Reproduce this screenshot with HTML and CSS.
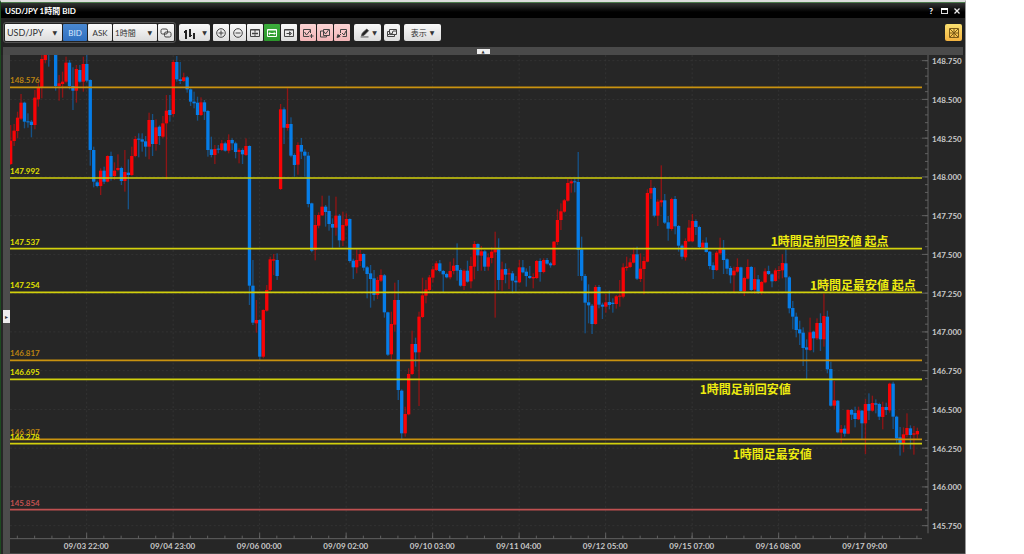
FILE: index.html
```
<!DOCTYPE html>
<html lang="ja">
<head>
<meta charset="utf-8">
<title>USD/JPY 1時間 BID</title>
<link rel="stylesheet" href="styles.css">
</head>
<body>
<main class="window">
  <header class="titlebar">
    <h1 class="title">USD/JPY 1時間 BID</h1>
    <div class="window-buttons">
      <button class="wbtn" aria-label="ヘルプ">?</button>
      <button class="wbtn" aria-label="最大化"><svg width="7" height="6" viewBox="0 0 7 6"><rect x=".5" y=".5" width="6" height="5" fill="none" stroke="#ddd"/><path d="M0 1h7" stroke="#fff" stroke-width="2"/></svg></button>
      <button class="wbtn" aria-label="閉じる"><svg width="6" height="6" viewBox="0 0 6 6"><path d="M.5.5l5 5M5.500 .5l-5 5" stroke="#eee" stroke-width="1.300"/></svg></button>
    </div>
  </header>

  <div class="toolbar">
    <div class="group framed">
      <label class="pick pair"><select aria-label="通貨ペア"><option>USD/JPY</option></select></label>
      <button class="tool text active">BID</button>
      <button class="tool text ask">ASK</button>
      <label class="pick period"><select aria-label="足種"><option>1時間</option></select></label>
      <button class="tool link" aria-label="連動"><svg viewBox="0 0 16 16"><rect x="3" y="4" width="6.500" height="5" rx="1.500"/><rect x="6.500" y="7" width="6.500" height="5" rx="1.500"/></svg></button>
    </div>
    <button class="tool wide-a" aria-label="チャート種類"><svg viewBox="0 0 16 16" class="solid"><path d="M3 5h2v9H3zM7 4h2v8H7zM11 8h2v6h-2zM2 6h1v2H2zM9 10h1v1H9z"/></svg><span class="caret">▼</span></button>
    <div class="group zoomers">
      <button class="tool" aria-label="拡大"><svg viewBox="0 0 16 16"><circle cx="8" cy="8" r="4.300"/><path d="M5.500 8h5M8 5.500v5"/></svg></button>
      <button class="tool" aria-label="縮小"><svg viewBox="0 0 16 16"><circle cx="8" cy="8" r="4.300"/><path d="M5.500 8h5"/></svg></button>
      <button class="tool" aria-label="間隔"><svg viewBox="0 0 16 16"><path d="M3.500 4.500h9v7h-9zM3.500 5h9M8 5v6M5 8.500h6M6 7.500v2M10 7.500v2"/></svg></button>
      <button class="tool green" aria-label="全体"><svg viewBox="0 0 16 16"><path d="M3.500 4.500h9v7h-9zM3.500 5h9M5 8.500h6M6 7.300L4.800 8.500 6 9.700M10 7.300l1.200 1.200L10 9.700"/></svg></button>
      <button class="tool" aria-label="最新へ"><svg viewBox="0 0 16 16"><path d="M3.500 4.500h9v7h-9zM3.500 5h9M5.500 8.500h4M8.500 6.800l2 1.700-2 1.700z"/></svg></button>
    </div>
    <div class="group pinks">
      <button class="tool pink" aria-label="追加"><svg viewBox="0 0 16 16"><path d="M9 11.500H3.500v-7h7V8M4.500 7l2 3 4-5M9.500 11h4M11.500 9v4"/></svg></button>
      <button class="tool pink" aria-label="複製"><svg viewBox="0 0 16 16"><path d="M6.500 4.500h6v6h-6zM6.500 6h-3v6h6v-1.500M7 6.500l1.500 2.500 3-4"/></svg></button>
      <button class="tool pink" aria-label="編集"><svg viewBox="0 0 16 16"><path d="M6.500 8V4.500h6v7h-4M8 8l2 2 2-4M4 12l3-3"/><path d="M3 12.500l1-3 2 2z" class="fill"/></svg></button>
    </div>
    <button class="tool wide-b" aria-label="描画"><svg viewBox="0 0 16 16"><path d="M4 11l1-3 5-4.500 2 2L7 10.500z" class="fill"/><path d="M3 12.500h9"/></svg><span class="caret">▼</span></button>
    <button class="tool single" aria-label="重ね表示"><svg viewBox="0 0 16 16"><path d="M5.500 4.500h7v5h-7zM5.500 6.500h-2v5h7v-2M4 10l2-2 2 1 1-3 3 0"/></svg></button>
    <button class="tool show">表示<span class="caret">▼</span></button>
    <button class="tool gold" aria-label="レイアウト"><svg viewBox="0 0 16 16"><path d="M3.500 3.500h9v9h-9zM8 3.500v9M3.500 8h9M4 4l8 8M12 4l-8 8"/></svg></button>
  </div>

  <div class="splitter"><button class="handle-top" aria-label="上部を開く">▲</button></div>

  <section class="workspace">
    <div class="side"><button class="handle-side" aria-label="左側を開く">▸</button></div>
    <div class="plot">
      <svg id="chart" class="chart" viewBox="30 165 2766 1455" preserveAspectRatio="none" role="img" aria-label="USD/JPY 1時間足"></svg>
      <div id="labels"></div>
    </div>
    <div class="prices" id="prices"></div>
    <div class="times" id="times"></div>
  </section>
</main>
<script src="chart.js"></script>
</body>
</html>
```
FILE: styles.css
```
* { box-sizing: border-box; }
body {
  margin: 0;
  background: #fff;
  font: 8px/12px Lato, "Noto Sans CJK JP", sans-serif;
}
button, select { font: inherit; margin: 0; padding: 0; border: 0; }

.window {
  display: flex;
  flex-direction: column;
  height: 100vh;
  margin-right: 58px;
  background: #222;
  border-top: 2px solid #ddd;
  border-right: 1px solid #999;
  border-left: 1px solid #1c4a20;
  color: #ddd;
}
.titlebar {
  display: flex;
  justify-content: space-between;
  align-items: center;
  height: 16px;
  padding: 0 4px;
  border-top: 1px solid #4a7a4a;
  background: linear-gradient(#333, #000 60%);
}
.title { margin: 0; font-size: 8px; line-height: 12px; font-weight: 700; color: #fff; }
.window-buttons { display: flex; gap: 5px; }
.wbtn {
  display: flex;
  align-items: center;
  justify-content: center;
  width: 8px;
  height: 10px;
  background: none;
  color: #fff;
  font-weight: 900;
}

.toolbar {
  display: flex;
  align-items: center;
  gap: 3px;
  height: 29px;
  padding: 0 3px 0 2px;
}
.group { display: flex; gap: 1px; }
.framed { padding: 1px; border: 1px solid #555; border-radius: 3px; }
.tool, .pick {
  display: flex;
  align-items: center;
  justify-content: center;
  width: 16px;
  height: 17px;
  border-radius: 2px;
  background: linear-gradient(#fafafa, #dcdcdc);
  color: #333;
}
.group .tool, .group .pick { border-radius: 1px; }
.tool svg { flex: none; width: 16px; height: 16px; fill: none; stroke: #444; stroke-width: 1; }
.tool .fill { fill: #222; }
.tool .solid { fill: #222; stroke: none; }
.pick { position: relative; }
.pick select {
  width: 100%;
  height: 100%;
  padding-left: 2px;
  appearance: none;
  background: none;
  color: #333;
}
.pick::after { content: "▼"; position: absolute; right: 5px; font: 6px "DejaVu Sans", sans-serif; pointer-events: none; }
.caret { font: 6px "DejaVu Sans", sans-serif; }
.pair { width: 57px; }
.pair select { font-size: 9px; }
.text { width: 24px; }
.period { width: 44px; }
.active { background: linear-gradient(#4a88d0, #3070c0); color: #dceaff; }
.green { background: linear-gradient(#3cae3c, #2c962c); }
.green svg { stroke: #fff; }
.pink { background: linear-gradient(#fcd4d4, #f3b6b8); }
.wide-a { width: 31px; gap: 4px; }
.wide-a .solid { fill: #222; stroke: none; }
.wide-b { width: 27px; gap: 0; }
.wide-b svg { width: 14px; }
.pinks { margin-right: 1px; }
.single { margin-right: 1px; }
.show { width: 37px; gap: 3px; }
.gold { width: 17px; margin-left: auto; background: linear-gradient(#fbe070, #f3b340); }
.gold svg { stroke: #7a5a18; }

.splitter {
  display: flex;
  justify-content: center;
  align-items: center;
  height: 8px;
  margin: 0 2px;
  background: #4a4a4a;
}
.handle-top { width: 13px; height: 5px; background: #eee; color: #333; font: 4px/5px "DejaVu Sans", sans-serif; }

.workspace {
  flex: 1;
  min-height: 0;
  display: grid;
  grid-template-columns: 9px 1fr 33px;
  grid-template-rows: 1fr 14px;
  background: #262626;
}
.side {
  grid-row: 1 / 3;
  display: flex;
  align-items: center;
  margin-left: 2px;
  background: #4c4c4c;
}
.handle-side { width: 7px; height: 13px; margin-top: 24px; background: #eee; color: #333; font: 6px/13px "DejaVu Sans", sans-serif; }
.plot { position: relative; min-height: 0; }
.chart { display: block; width: 100%; height: 100%; }
.prices, .times { font-weight: 700; color: #c8c8c8; }
.prices {
  display: flex;
  flex-direction: column;
  justify-content: space-between;
  padding-bottom: 8px;
}
.times {
  grid-column: 2 / 4;
  display: grid;
  grid-template-columns: repeat(10, 1fr);
  padding: 0 57px 0 33px;
  border-bottom: 1px solid #484848;
  text-align: center;
  white-space: nowrap;
}
.level { position: absolute; left: 0; line-height: 10px; font-weight: 700; transform: translateY(-12px); }
.note {
  position: absolute;
  transform: translateY(-50%);
  font: 700 12px/16px "Noto Sans CJK JP", sans-serif;
  color: #eeec10;
  white-space: nowrap;
}

.grid { stroke: #3a3a3a; stroke-width: 2; stroke-dasharray: 6 7; }
.axis { stroke: #606060; stroke-width: 3; }
.up { fill: #f80306; }
.down { fill: #067de8; }
.wick { opacity: .5; }
.yellow { color: #e0e000; stroke: #d2d00c; }
.orange { color: #b98212; stroke: #c9920f; }
.red { color: #c05050; stroke: #c05050; }
.line { stroke-width: 5; }
```
FILE: chart.js
```
// One candle per entry: direction (R up, B down), high, body top, body bottom, low.
const candles = `
R375 422 492 495,R372 392 423 438,R335 353 393 415,R282 308 356 360,B305 308 365 385,B340 364 367 383,B360 365 375 412,R270 293 375 388,R250 262 298 320,R150 177 262 295,
R150 150 180 190,B150 150 153 200,R150 150 152 153,B150 150 258 272,R225 250 258 302,R215 245 252 293,R170 188 245 250,B180 188 258 268,B202 258 272 330,R195 207 272 308,
B195 210 245 248,R170 192 245 275,B160 192 242 247,B238 240 450 497,B440 450 545 562,B542 547 558 562,R505 512 558 585,B500 512 545 552,R466 468 545 547,B455 468 530 542,
R487 512 528 540,R463 504 510 514,B500 504 543 555,R450 516 543 575,B478 518 525 628,R440 468 525 528,R408 417 468 472,B400 416 419 472,B400 418 425 455,B408 424 440 470,
R338 360 440 478,B342 360 432 468,R358 382 432 452,B376 380 408 435,R348 370 410 415,R285 332 370 538,B285 330 345 365,R180 186 342 350,B168 186 238 245,B186 238 243 252,
R218 232 243 246,B228 232 268 278,B265 268 305 318,B275 305 310 325,B290 308 345 362,R292 307 345 348,B300 307 335 360,B330 333 450 470,B410 448 465 472,R435 447 465 492,
B435 446 449 460,R420 430 450 453,B425 430 452 455,R403 420 452 460,B415 420 430 450,B425 430 456 475,R445 450 456 490,B445 450 463 492,R415 438 465 468,B436 438 857 915,
B780 857 968 975,R900 960 970 998,B958 960 1070 1080,R928 930 1070 1075,R855 870 932 935,R770 778 870 875,R762 778 782 825,B760 780 828 840,R312 328 567 570,B322 328 383 432,
R265 372 384 392,B352 372 467 472,B460 465 495 530,R427 435 494 524,B414 435 455 477,B448 455 467 530,B456 467 612 622,B608 610 752 757,R645 675 750 781,R637 645 677 685,
R587 620 646 648,B615 620 636 680,B587 633 672 692,B655 672 683 746,R590 647 683 707,B642 647 721 742,R635 675 722 738,R640 657 677 680,B655 657 783 788,B776 782 802 837,
R748 780 802 820,R750 762 783 798,B760 762 803 812,B798 802 822 895,B795 820 837 923,B810 835 885 902,R830 840 885 897,R808 825 842 846,B822 826 937 953,B935 937 1064 1068,
R935 972 1063 1080,R848 900 974 995,B840 900 1170 1200,B1168 1172 1300 1317,R1220 1242 1300 1310,R1105 1122 1243 1246,R992 1032 1122 1125,B1013 1032 1057 1100,R935 950 1057 1218,R833 886 951 954,
R840 868 887 910,R825 832 870 875,R798 808 833 848,R783 790 810 813,B780 790 813 817,B810 813 823 877,B818 822 832 835,R785 813 832 838,R775 797 813 823,B730 795 812 842,
B805 810 857 860,R808 812 858 870,B782 812 845 848,R770 798 844 865,R723 732 800 838,B730 732 766 813,R738 754 767 812,B750 754 800 813,R760 772 800 812,R742 755 774 790,
R695 748 757 953,B715 748 840 870,R785 808 840 872,B790 807 824 850,R805 820 823 867,B813 820 842 880,B828 842 847 875,R780 802 847 850,B780 802 817 820,B805 815 828 860,
B798 828 834 837,R820 831 835 865,R780 783 834 837,B775 783 816 845,R775 780 816 820,B774 780 791 794,B786 790 796 803,R723 725 795 798,R628 660 726 735,R610 634 660 690,
R597 601 635 638,R537 549 602 605,R538 544 550 578,B535 544 547 577,B456 546 750 828,B710 748 828 842,B822 828 908 1000,B853 907 916 970,B912 917 972 1002,R855 861 972 974,
B855 861 914 925,B908 914 920 957,R882 907 920 938,B872 906 915 928,B895 908 912 938,R885 889 912 926,R840 887 890 920,R790 802 890 895,R770 800 804 812,R775 787 801 804,
R743 763 788 790,B740 763 836 840,R760 806 837 846,R770 783 807 883,R568 579 785 787,R540 564 580 597,B560 564 647 652,R598 605 647 678,R496 601 607 620,B582 601 668 672,
B648 667 686 722,R593 597 687 692,B588 597 679 703,B675 678 737 755,B733 737 770 778,R715 723 772 782,R660 683 724 726,R642 663 724 726,B658 663 681 705,B677 681 741 745,
R720 728 743 745,B712 728 756 758,B753 755 798 808,B787 796 810 837,R753 758 810 813,R713 747 760 765,B720 748 780 822,B775 778 806 822,B798 804 826 850,R800 812 826 878,
R775 801 815 818,B800 802 873 877,R830 834 874 888,R778 801 836 838,B798 801 870 873,R802 837 869 882,B825 838 875 882,R843 846 877 884,R805 814 847 850,B797 813 822 825,
B820 823 844 862,R805 811 843 845,R798 810 813 838,R763 789 811 835,B747 790 832 875,B828 832 925 940,B903 924 950 988,B938 950 990 1012,B962 988 1000 1035,B982 998 1044 1098,
B1018 1042 1049 1137,R953 997 1050 1053,B992 995 1015 1057,R955 969 1015 1020,B940 969 1018 1053,R880 948 1018 1040,B932 950 1108 1120,B1085 1107 1217 1220,R1143 1201 1217 1228,B1200 1202 1297 1300,
R1275 1287 1298 1332,B1276 1286 1301 1310,R1228 1230 1301 1303,B1227 1230 1244 1260,B1220 1239 1257 1282,R1220 1231 1258 1260,B1230 1232 1270 1318,R1197 1212 1270 1362,B1180 1212 1232 1260,R1187 1209 1232 1235,
B1198 1210 1214 1240,B1208 1212 1250 1260,R1205 1221 1251 1288,B1208 1221 1230 1245,R1148 1151 1231 1238,B1145 1151 1250 1287,B1247 1250 1315 1330,B1281 1312 1330 1367,R1282 1303 1331 1357,R1240 1284 1305 1312,
B1276 1285 1305 1348,R1278 1300 1304 1364,R1283 1293 1303 1316`.trim().split(",");

const levels = [
  ["148.576", 262, "orange"], ["147.992", 534, "yellow"], ["147.537", 746, "yellow"],
  ["147.254", 877, "yellow"], ["146.817", 1081, "orange"], ["146.695", 1138, "yellow"],
  ["146.307", 1318, "orange"], ["146.278", 1331, "yellow"], ["145.854", 1529, "red"]
];
const notes = [
  ["1時間足前回安値 起点", 2312, 722], ["1時間足最安値 起点", 2430, 854],
  ["1時間足前回安値", 2099, 1168], ["1時間足最安値", 2198, 1361]
];
const times = ["09/03 22:00", "09/04 23:00", "09/06 00:00", "09/09 02:00", "09/10 03:00",
  "09/11 04:00", "09/12 05:00", "09/15 07:00", "09/16 08:00", "09/17 09:00"];

const view = { x: 30, y: 165, w: 2766, h: 1455, right: 2766, bottom: 1616 };
const line = (x1, y1, x2, y2, cls) => `<line x1="${x1}" y1="${y1}" x2="${x2}" y2="${y2}" class="${cls}"/>`;
const rect = (x, y, w, h, cls) => `<rect x="${x}" y="${y}" width="${w}" height="${h}" class="${cls}"/>`;
let out = "";

for (let i = 0; i < 13; i++) {
  const y = 182 + i * 116.25;
  out += line(view.x, y, view.right, y, "grid") + line(view.right, y, 2784, y, "axis");
}
for (let i = 0; i < 10; i++) {
  const x = 260 + i * 259.5;
  out += line(x, view.y, x, 1600, "grid") + line(x, 1598, x, view.bottom, "axis");
}
for (let y = 182; y < 1600; y += 23.25) out += line(2775, y, 2784, y, "axis");
for (let x = 52; x < view.right; x += 51.9) out += line(x, 1607, x, view.bottom, "axis");
out += line(2784, view.y, 2784, 1600, "axis") + line(view.x, view.bottom, view.right, view.bottom, "axis");

candles.forEach((entry, i) => {
  const [high, open, close, low] = entry.trim().slice(1).split(" ").map(Number);
  const cls = entry.trim()[0] === "R" ? "up" : "down";
  const x = 32 + i * 10.382;
  out += rect(x - 2, high, 4, low - high, cls + " wick");
  out += rect(x - 5, open, 10, close - open, cls);
});
for (const [, y, cls] of levels) out += line(view.x, y, view.right, y, "line " + cls);
document.getElementById("chart").innerHTML = out;

const leftOf = x => ((x - view.x) / view.w * 100).toFixed(2);
const topOf = y => ((y - view.y) / view.h * 100).toFixed(2);
document.getElementById("labels").innerHTML =
  levels.map(([t, y, c]) => `<span class="level ${c}" style="top:${topOf(y)}%">${t}</span>`).join("") +
  notes.map(([t, x, y]) => `<span class="note" style="left:${leftOf(x)}%;top:${topOf(y)}%">${t}</span>`).join("");

document.getElementById("prices").innerHTML =
  Array.from({ length: 13 }, (_, i) => `<span>${(148.75 - i * 0.25).toFixed(3)}</span>`).join("");
document.getElementById("times").innerHTML = times.map(t => `<span>${t}</span>`).join("");
```
